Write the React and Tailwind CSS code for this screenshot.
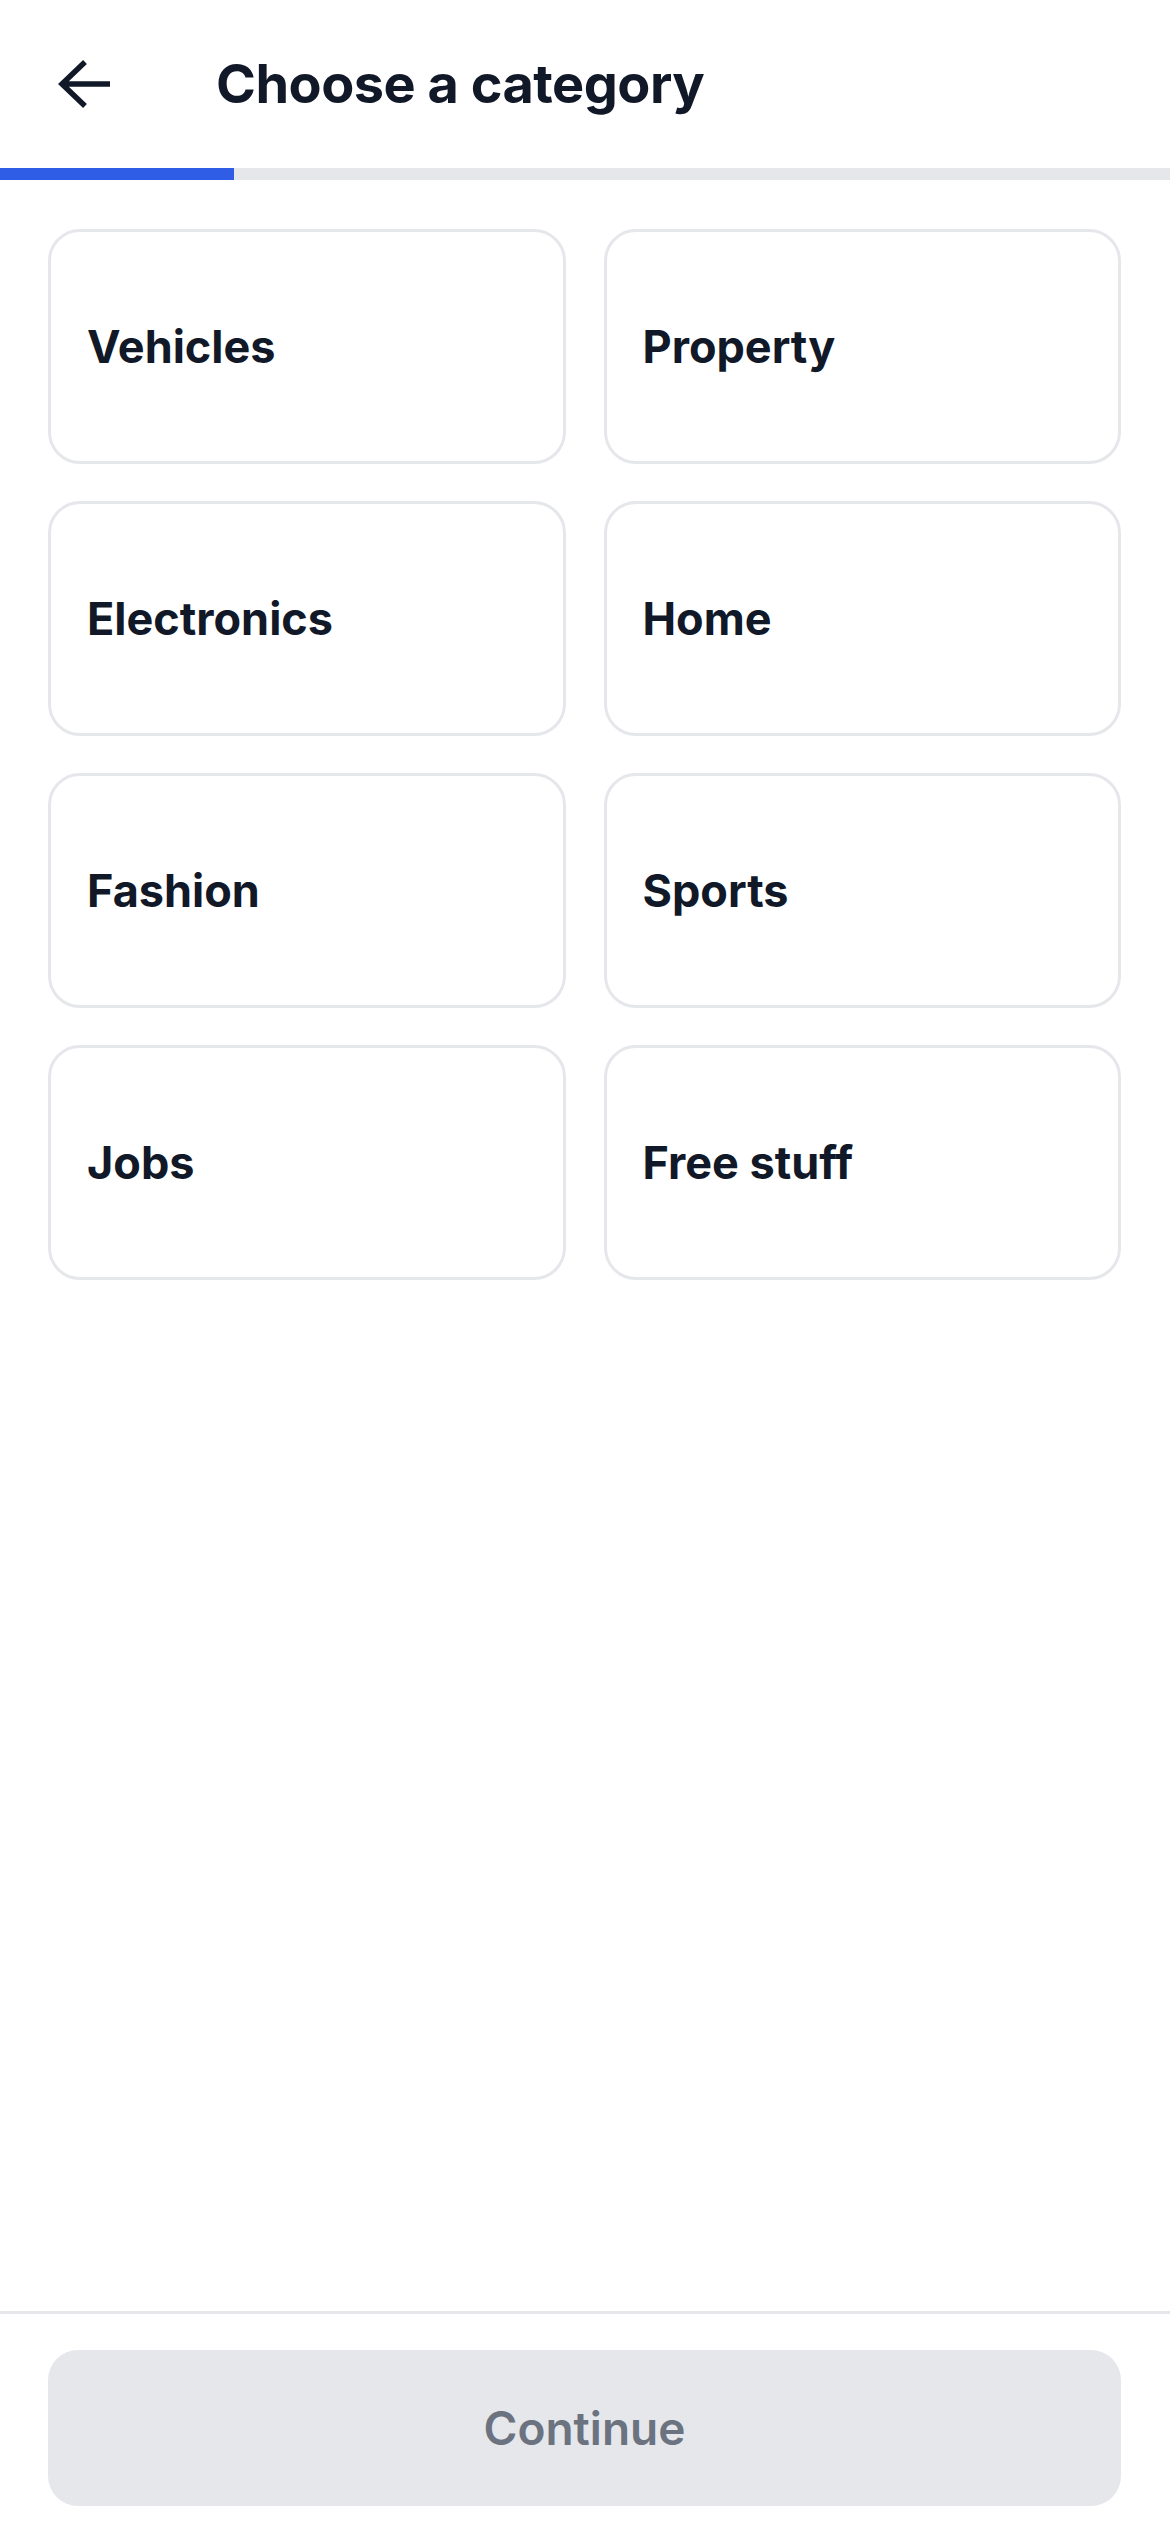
import React from "react";

const categories = [
  "Vehicles",
  "Property",
  "Electronics",
  "Home",
  "Fashion",
  "Sports",
  "Jobs",
  "Free stuff",
];

export default function App() {
  return (
    <div
      className="flex h-[2532px] w-[1170px] flex-col bg-white text-[#111827]"
      style={{ fontFamily: "Inter, 'Noto Sans', sans-serif" }}
    >
      <header className="flex h-[168px] items-center">
        <button className="ml-[58px] flex h-[52px] w-[54px] items-center justify-center">
          <svg width="54" height="50" viewBox="0 0 54 50" fill="none">
            <path
              d="M52 25H5M27 3L4 25L27 47"
              stroke="#111827"
              strokeWidth="5.5"
              strokeLinecap="butt"
              strokeLinejoin="miter"
            />
          </svg>
        </button>
        <h1 className="ml-[104px] text-[54px] font-bold tracking-[-0.5px] leading-none">
          Choose a category
        </h1>
      </header>
      <div className="h-[12px] w-full bg-[#e5e7eb]">
        <div className="h-full w-[234px] bg-[#2f5de6]" />
      </div>
      <div className="grid grid-cols-2 gap-x-[38px] gap-y-[37px] pl-[48px] pr-[49px] pt-[49px]">
        {categories.map((c) => (
          <button
            key={c}
            className="flex h-[235px] items-center rounded-[32px] border-[3px] border-[#e5e7eb] bg-white pl-[36px] text-left text-[45px] font-bold"
          >
            {c}
          </button>
        ))}
      </div>
      <div className="flex-1" />
      <div className="border-t-[3px] border-[#e5e7eb] pl-[48px] pr-[49px] pt-[36px] pb-[26px]">
        <button className="flex h-[156px] w-full items-center justify-center rounded-[30px] bg-[#e5e7eb] text-[46px] font-semibold text-[#6b7280]">
          Continue
        </button>
      </div>
    </div>
  );
}
